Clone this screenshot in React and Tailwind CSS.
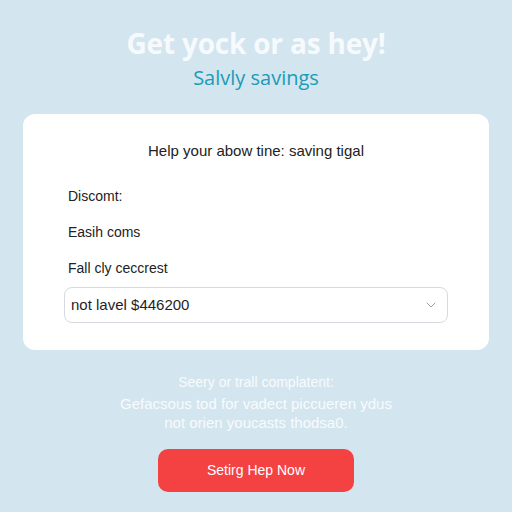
import React from 'react';
import { ChevronDown } from 'lucide-react';

export default function App() {
    return (
        <div className="w-[512px] h-[512px] overflow-hidden bg-[#d3e5ef] flex flex-col items-center font-['Liberation_Sans',Arial,sans-serif]">
            <h1 className="mt-[24px] text-[28px] leading-[38px] font-bold text-[#f7fafc] font-['Open_Sans',sans-serif] tracking-[-0.2px]">
                Get yock or as hey!
            </h1>
            <p className="mt-[2px] text-[20px] leading-[28px] text-[#1c9bb9] font-['Open_Sans',sans-serif]">
                Salvly savings
            </p>

            <div className="mt-[22px] w-[466px] h-[236px] bg-white rounded-[12px] flex flex-col px-[41px]">
                <p className="mt-[27px] text-center text-[15px] leading-[20px] text-[#222]">
                    Help your abow tine: saving tigal
                </p>
                <div className="mt-[26px] flex flex-col gap-[17px] text-[14px] leading-[19px] text-[#222] pl-[4px]">
                    <span>Discomt:</span>
                    <span>Easih coms</span>
                    <span>Fall cly ceccrest</span>
                </div>
                <div className="mt-[9px] h-[36px] border border-[#d6d9dd] rounded-[8px] flex items-center justify-between px-[6px] pr-[8px]">
                    <span className="text-[15px] text-[#1f1f1f]">not lavel $446200</span>
                    <ChevronDown className="w-[16px] h-[16px] text-[#9ca3af]" strokeWidth={1.5} />
                </div>
            </div>

            <div className="mt-[22px] flex flex-col items-center text-[#f8fbfd]">
                <p className="text-[14px] leading-[20px]">Seery or trall complatent:</p>
                <p className="mt-[2px] text-[15px] leading-[19px]">Gefacsous tod for vadect piccueren ydus</p>
                <p className="text-[15px] leading-[19px]">not orien youcasts thodsa0.</p>
            </div>

            <button className="mt-[17px] w-[196px] h-[43px] rounded-[10px] bg-[#f44141] text-white text-[14px]">
                Setirg Hep Now
            </button>
        </div>
    );
}
